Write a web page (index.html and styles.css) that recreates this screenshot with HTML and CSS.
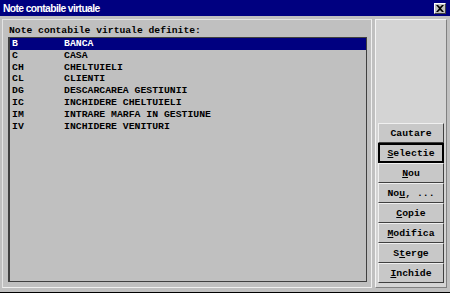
FILE: index.html
```html
<!DOCTYPE html>
<html lang="ro">
<head>
    <meta charset="utf-8">
    <title>Note contabile virtuale</title>
    <link rel="stylesheet" href="styles.css">
</head>
<body>
    <div class="window">
        <!-- Title bar -->
        <div class="titlebar">
            <span class="title">Note contabile virtuale</span>
            <span class="close">
                <svg width="8" height="7" viewBox="0 0 8 7">
                    <path d="M0 0h2l2 2 2-2h2L5 3.5 8 7H6L4 5 2 7H0l3-3.5z" fill="#000"/>
                </svg>
            </span>
        </div>

        <div class="client">
            <!-- List panel -->
            <div class="list-panel">
                <div class="list-label">Note contabile virtuale definite:</div>
                <div class="listbox">
                    <div class="row selected"><span class="code">B</span><span>BANCA</span></div>
                    <div class="row"><span class="code">C</span><span>CASA</span></div>
                    <div class="row"><span class="code">CH</span><span>CHELTUIELI</span></div>
                    <div class="row"><span class="code">CL</span><span>CLIENTI</span></div>
                    <div class="row"><span class="code">DG</span><span>DESCARCAREA GESTIUNII</span></div>
                    <div class="row"><span class="code">IC</span><span>INCHIDERE CHELTUIELI</span></div>
                    <div class="row"><span class="code">IM</span><span>INTRARE MARFA IN GESTIUNE</span></div>
                    <div class="row"><span class="code">IV</span><span>INCHIDERE VENITURI</span></div>
                </div>
            </div>

            <!-- Buttons panel -->
            <div class="button-panel">
                <button class="btn">Cautare</button>
                <button class="btn default"><u>S</u>electie</button>
                <button class="btn"><u>N</u>ou</button>
                <button class="btn">No<u>u</u>, ...</button>
                <button class="btn"><u>C</u>opie</button>
                <button class="btn"><u>M</u>odifica</button>
                <button class="btn">S<u>t</u>erge</button>
                <button class="btn"><u>I</u>nchide</button>
            </div>
        </div>
    </div>
</body>
</html>
```

FILE: styles.css
```css
/* Reset */
* {
    margin: 0;
    padding: 0;
    box-sizing: border-box;
}

body {
    width: 450px;
    height: 293px;
    overflow: hidden;
    background: #c0c0c0;
    font-family: 'Liberation Mono', monospace;
}

/* Window */
.window {
    height: 293px;
    display: flex;
    flex-direction: column;
    border-bottom: 1px solid #000;
}

.titlebar {
    height: 16px;
    background: #000080;
    display: flex;
    align-items: center;
    justify-content: space-between;
    padding: 0 4px 0 3px;
}

.title {
    color: #fff;
    font-family: 'Liberation Sans', Arial, sans-serif;
    font-weight: 700;
    font-size: 10.3px;
    letter-spacing: -0.6px;
}

.close {
    width: 12px;
    height: 11px;
    background: #c0c0c0;
    border: 1px solid;
    border-color: #fff #404040 #404040 #fff;
    display: flex;
    align-items: center;
    justify-content: center;
}

/* Client area */
.client {
    flex: 1;
    display: flex;
    gap: 3px;
    padding: 3px 3px 4px 2px;
}

.list-panel {
    width: 370px;
    display: flex;
    flex-direction: column;
    border: 1px solid;
    border-color: #e4e4e4 #f0f0f0 #f0f0f0 #e4e4e4;
    padding: 5px 4px 5px 5px;
}

.list-label {
    font-size: 9.7px;
    font-weight: 700;
    line-height: 12px;
    height: 12px;
    padding-left: 1px;
    color: #000;
}

.listbox {
    flex: 1;
    border: 1px solid #404040;
    border-left-width: 2px;
    background: #c0c0c0;
}

.row {
    display: flex;
    height: 11.8px;
    line-height: 11.8px;
    font-size: 9.8px;
    font-weight: 700;
    color: #000;
    padding-left: 2px;
    white-space: pre;
}

.row .code {
    width: 52px;
}

.row.selected {
    background: #000080;
    color: #fff;
}

/* Buttons */
.button-panel {
    flex: 1;
    display: flex;
    flex-direction: column;
    justify-content: flex-end;
    background: #d4d4d4;
    border: 1px solid;
    border-color: #f4f4f4 #808080 #808080 #f4f4f4;
    padding: 0 2px 4px 2px;
}

.btn {
    height: 20px;
    background: #c8c8c8;
    border: 1px solid;
    border-color: #f0f0f0 #404040 #404040 #f0f0f0;
    font-family: 'Liberation Mono', monospace;
    font-size: 9.8px;
    font-weight: 700;
    color: #000;
}

.btn.default {
    border: 2px solid #000;
}
```
